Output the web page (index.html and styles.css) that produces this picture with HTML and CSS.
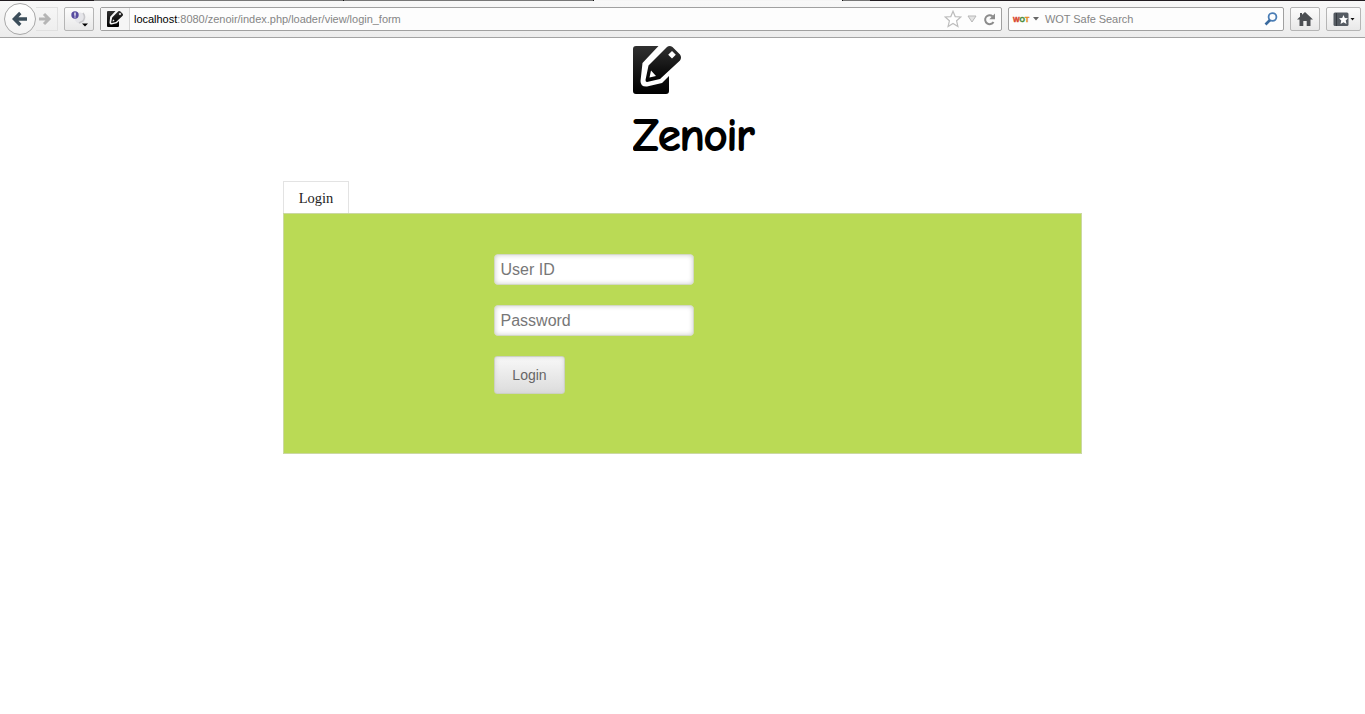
FILE: index.html
```html
<!DOCTYPE html>
<html lang="en">
<head>
<meta charset="utf-8">
<title>Zenoir</title>
<link rel="stylesheet" href="styles.css">
</head>
<body>
<svg class="defs" width="0" height="0">
  <defs>
    <linearGradient id="ink" x1="0" y1="0" x2="0" y2="1"><stop offset="0" stop-color="#303030"/><stop offset="1" stop-color="#000"/></linearGradient>
    <symbol id="pencil" viewBox="0 0 48 48">
      <path fill="url(#ink)" d="M3 0H25.500L9.500 17L7.500 35Q7.500 41 14 40.500L29 37L36 30V45Q36 48 33 48H3Q0 48 0 45V3Q0 0 3 0Z"/>
      <path fill="url(#ink)" fill-rule="evenodd" d="M34 1Q36.500-1 39.500 1L47 8.500Q49 11.500 47 14.500L27 33L14 36Q12.500 36 12.500 34L15.500 19.500ZM39 5L35.200 8.800L39 12.600L42.800 8.800ZM18 24.500L16.500 31.500L23 30Z"/>
    </symbol>
  </defs>
</svg>

<div class="tabstrip">
  <span class="strip-dark strip-start"></span><span class="strip-tab"></span><span class="strip-gap"></span><span class="strip-tab"></span><span class="strip-gap"></span><span class="strip-active"></span><span class="strip-gap"></span><span class="strip-new"></span><span class="strip-dark strip-end"></span>
</div>
<nav class="toolbar">
  <span class="back"><svg width="16" height="16" viewBox="0 0 16 16"><path d="M15 8H3M8.300 2L2.300 8L8.300 14" fill="none" stroke="#3b4d5a" stroke-width="3.300"/></svg></span>
  <span class="forward"><svg width="14" height="14" viewBox="0 0 14 14"><path d="M1 7H11M6 2L11 7L6 12" fill="none" stroke="#b5b5b5" stroke-width="3"/></svg></span>
  <span class="tool addon"><svg width="20" height="20" viewBox="1 1 20 20"><circle cx="12" cy="10" r="5.500" fill="#e6e6ea"/><path d="M15 5Q18 9 15 13L11 15" fill="none" stroke="#c8c8cb" stroke-width="1.500"/><circle cx="7" cy="7" r="3.700" fill="#584ca0"/><path d="M7 4.500V7.800M7 8.600V9.600" stroke="#fff" stroke-width="1.300"/><path d="M14 15.500H20L17 18.500Z" fill="#000"/></svg></span>
  <div class="field location">
    <span class="identity"><svg width="16" height="16"><use href="#pencil"/></svg></span>
    <span class="url"><b>localhost</b>:8080/zenoir/index.php/loader/view/login_form</span>
    <svg class="star" width="18" height="18" viewBox="0 0 18 18"><path d="M9 1.300L11.200 6.600L16.800 7L12.600 10.800L13.900 16.500L9 13.400L4.100 16.500L5.400 10.800L1.200 7L6.800 6.600Z" fill="#fff" stroke="#bdbdbd" stroke-width="1.200"/></svg>
    <svg class="drop" width="10" height="8" viewBox="0 0 10 8"><path d="M1 1H9L5 7Z" fill="#e4e4e4" stroke="#b7b7b7"/></svg>
    <svg class="reload" width="13" height="13" viewBox="0 0 13 13"><path d="M9.500 3.200A4.500 4.500 0 1 0 10.500 9" fill="none" stroke="#8c8c8c" stroke-width="2"/><path d="M12 .5V6.300H6.300Z" fill="#8c8c8c"/></svg>
  </div>
  <div class="field search">
    <span class="wot"><i>W</i><em>O</em><u>T</u></span>
    <svg class="caret" width="6" height="4"><path d="M0 0H6L3 3.500Z" fill="#666"/></svg>
    <span class="hint">WOT Safe Search</span>
    <svg width="14" height="14" viewBox="0 0 14 14"><circle cx="8.500" cy="5" r="3.900" fill="none" stroke="#4a7db5" stroke-width="1.800"/><path d="M6 8L1.500 12.500" stroke="#3a6a9e" stroke-width="2.600"/></svg>
  </div>
  <span class="tool home"><svg width="16" height="14" viewBox="0 0 16 14"><path d="M8 0L16 7.500H13.500V14H9.700V9H6.300V14H2.500V7.500H0L3 4.700V1H5V2.800Z" fill="#4c4f53"/></svg></span>
  <span class="tool bookmarks"><svg width="22" height="15" viewBox="0 0 22 15"><rect x=".5" y=".5" width="15" height="13.500" rx="1.500" fill="#555b62"/><path d="M3.500 1V14" stroke="#353a40"/><path d="M10.500 3L11.800 6L15 6.300L12.700 8.500L13.500 12L10.500 10.200L7.500 12L8.300 8.500L6 6.300L9.200 6Z" fill="#fff"/><path d="M17.500 6H21.500L19.500 8.600Z" fill="#111"/></svg></span>
</nav>

<header class="brand">
  <svg class="logo" width="48" height="48"><use href="#pencil"/></svg>
  <h1><svg width="140" height="60"><text class="wordmark" x="0" y="37.500" textLength="121" lengthAdjust="spacing">Zenoir</text></svg></h1>
</header>
<main class="panel">
  <div class="tab">Login</div>
  <form class="login">
    <input type="text" placeholder="User ID">
    <input type="password" placeholder="Password">
    <button type="button">Login</button>
  </form>
</main>
</body>
</html>
```
FILE: styles.css
```css
* { box-sizing: border-box; }
body { margin: 0; background: #fff; overflow: hidden; }
svg { display: block; flex: none; }
.defs { position: absolute; }
.tabstrip { display: flex; height: 1px; }
.strip-dark { background: #211c20; }
.strip-start { width: 94px; }
.strip-tab { width: 249px; background: #777; }
.strip-gap { width: 1px; background: #111; }
.strip-active { width: 248px; background: #f5f5f5; }
.strip-new { width: 27px; background: #777; }
.strip-end { flex: 1; }
.toolbar { display: flex; align-items: center; height: 37px; padding: 0 4px; border-bottom: 1px solid #a3a3a3; background: linear-gradient(#f8f8f8, #ececec); font: 11px "Liberation Sans", Arial, sans-serif; }
.back { width: 32px; height: 32px; border: 1px solid #a8a8a8; border-radius: 50%; background: linear-gradient(#fff, #f3f3f3); display: grid; place-items: center; }
.forward { width: 22px; height: 24px; border: 1px solid #e0e0e0; border-left: 0; display: grid; place-items: center start; margin-right: 6px; padding-left: 2px; }
.tool { height: 24px; border: 1px solid #b5b5b5; border-radius: 2px; background: linear-gradient(#fcfcfc, #e8e8e8); display: grid; place-items: center; }
.addon { width: 30px; margin-right: 6px; }
.home { width: 30px; margin-right: 6px; }
.bookmarks { width: 35px; }
.field { display: flex; align-items: center; height: 24px; border: 1px solid #a0a0a0; border-radius: 2px; background: #fdfdfd; color: #858585; }
.location { width: 902px; margin-right: 6px; }
.identity { width: 29px; height: 22px; border-right: 1px solid #d5d5d5; background: #f5f5f5; display: grid; place-items: center; }
.url { flex: 1; padding-left: 4px; letter-spacing: -.02px; }
.url b { color: #000; font-weight: normal; }
.star { margin-right: 5px; }
.drop { margin-right: 6px; }
.reload { margin-right: 5px; }
.search { width: 276px; margin-right: 6px; padding: 0 5px 0 4px; }
.wot { width: 19px; font-size: 7px; font-weight: bold; -webkit-text-stroke: .4px; }
.wot i { color: #d9452d; font-style: normal; }
.wot em { color: #458b38; font-style: normal; }
.wot u { color: #e48b20; text-decoration: none; }
.caret { margin: 0 6px 0 1px; }
.hint { flex: 1; letter-spacing: -.05px; }
.brand { width: 140px; margin: 8px 0 0 633px; }
h1 { margin: 18px 0 0; height: 60px; }
.wordmark { font: 400 44px "Comic Sans MS", "Comic Neue", Lato, sans-serif; fill: #000; stroke: #000; stroke-width: 2.2px; stroke-linejoin: round; }
.panel { width: 799px; margin: 9px 0 0 283px; }
.tab { width: 66px; height: 32px; border: 1px solid #e3e3e3; border-bottom: 0; text-align: center; font: 14.500px/33px "Liberation Serif", "Times New Roman", serif; color: #222; }
.login { height: 241px; padding: 40px 0 0 210px; background: #bada55; border: 1px solid #cbd8a2; display: flex; flex-direction: column; align-items: flex-start; }
input { width: 200px; height: 31px; margin: 0 0 20px; padding: 0 5.500px; border: 1px solid #d3d8c5; border-radius: 4px; background: #fff; box-shadow: inset 0 0 5px #ccc; font: 16px "Liberation Sans", Arial, sans-serif; }
input::placeholder { color: #777; }
button { width: 71px; height: 38px; padding: 0; border: 1px solid #cdd1c2; border-radius: 3px; background: linear-gradient(#f8f8f8, #dcdcdc); box-shadow: inset 0 0 4px #d5d5d5; color: #666; font: 14px "Liberation Sans", Arial, sans-serif; }
```
